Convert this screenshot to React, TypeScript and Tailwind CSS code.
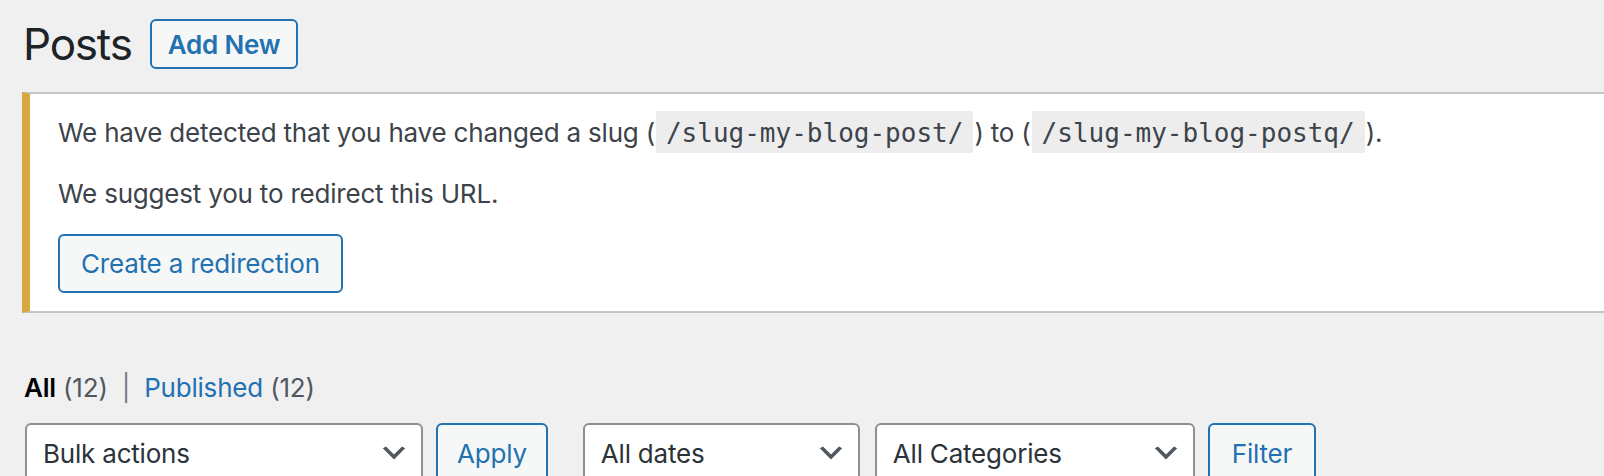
import React from 'react';

function Chevron() {
  return (
    <svg
      viewBox="0 0 20 20"
      className="absolute right-[11px] top-1/2 h-[32px] w-[32px] -translate-y-1/2"
    >
      <path d="M5 6l5 5 5-5 2 1-7 7-7-7 2-1z" fill="#50575e" />
    </svg>
  );
}

function Select({ label, width }: { label: string; width: string }) {
  return (
    <div
      className={`relative flex h-[60px] shrink-0 items-center rounded-[6px] border-2 border-[#8c8f94] bg-white pl-[16px] text-[26px] tracking-[-0.2px] text-[#2c3338] ${width}`}
    >
      {label}
      <Chevron />
    </div>
  );
}

function SecondaryButton({ children, pad }: { children: React.ReactNode; pad: string }) {
  return (
    <div
      className={`flex h-[60px] shrink-0 items-center rounded-[6px] border-2 border-[#2271b1] bg-[#f6f7f7] text-[26px] tracking-[-0.2px] text-[#2271b1] ${pad}`}
    >
      {children}
    </div>
  );
}

export default function App() {
  const code = 'px-[10px] pt-[7px] pb-[5px] mx-[1px] bg-[#ededed] text-[#3c434a] font-["DejaVu_Sans_Mono",monospace] text-[26px] tracking-normal';

  return (
    <div className="min-h-screen overflow-hidden bg-[#f0f0f1] pl-[22px] font-['Inter',sans-serif] text-[#3c434a]">
      {/* Page title */}
      <div className="mt-[19px] flex h-[50px] items-center">
        <h1 className="pl-[1px] text-[44px] leading-none font-normal tracking-[-1.2px] text-[#1d2327]">Posts</h1>
        <div className="ml-[18px] flex h-[50px] items-center rounded-[6px] border-2 border-[#2271b1] bg-[#f6f7f7] px-[16px] text-[26px] font-semibold tracking-[-0.2px] text-[#2271b1]">
          Add New
        </div>
      </div>

      {/* Slug change notice */}
      <div className="-mr-[20px] mt-[23px] border-y-2 border-l-[8px] border-y-[#c3c4c7] border-l-[#d6a83e] bg-white pl-[28px] pt-[19px] pb-[18px] tracking-[-0.2px]">
        <p className="text-[26px] leading-[39px]">
          We have detected that you have changed a slug (<code className={code}>/slug-my-blog-post/</code>) to (
          <code className={code}>/slug-my-blog-postq/</code>).
        </p>
        <p className="mt-[21px] text-[26px] leading-[39px]">We suggest you to redirect this URL.</p>
        <div className="mt-[21px] flex">
          <div className="flex h-[59px] items-center rounded-[6px] border-2 border-[#2271b1] bg-[#f6f7f7] px-[21px] text-[26px] text-[#2271b1]">
            Create a redirection
          </div>
        </div>
      </div>

      {/* Status filters */}
      <ul className="mt-[55px] flex items-center pl-[2px] text-[26px] leading-[39px] tracking-[-0.2px]">
        <li>
          <span className="font-semibold text-black">All</span> <span className="text-[#50575e]">(12)</span>
        </li>
        <li className="px-[14px] text-[#787c82]">|</li>
        <li>
          <span className="text-[#2271b1]">Published</span> <span className="text-[#50575e]">(12)</span>
        </li>
      </ul>

      {/* Table nav */}
      <div className="mt-[16px] flex items-start pl-[3px]">
        <Select label="Bulk actions" width="w-[398px]" />
        <div className="ml-[13px]">
          <SecondaryButton pad="px-[19px]">Apply</SecondaryButton>
        </div>
        <div className="ml-[35px] flex gap-[15px]">
          <Select label="All dates" width="w-[277px]" />
          <Select label="All Categories" width="w-[320px]" />
        </div>
        <div className="ml-[13px]">
          <SecondaryButton pad="px-[22px]">Filter</SecondaryButton>
        </div>
      </div>
    </div>
  );
}
